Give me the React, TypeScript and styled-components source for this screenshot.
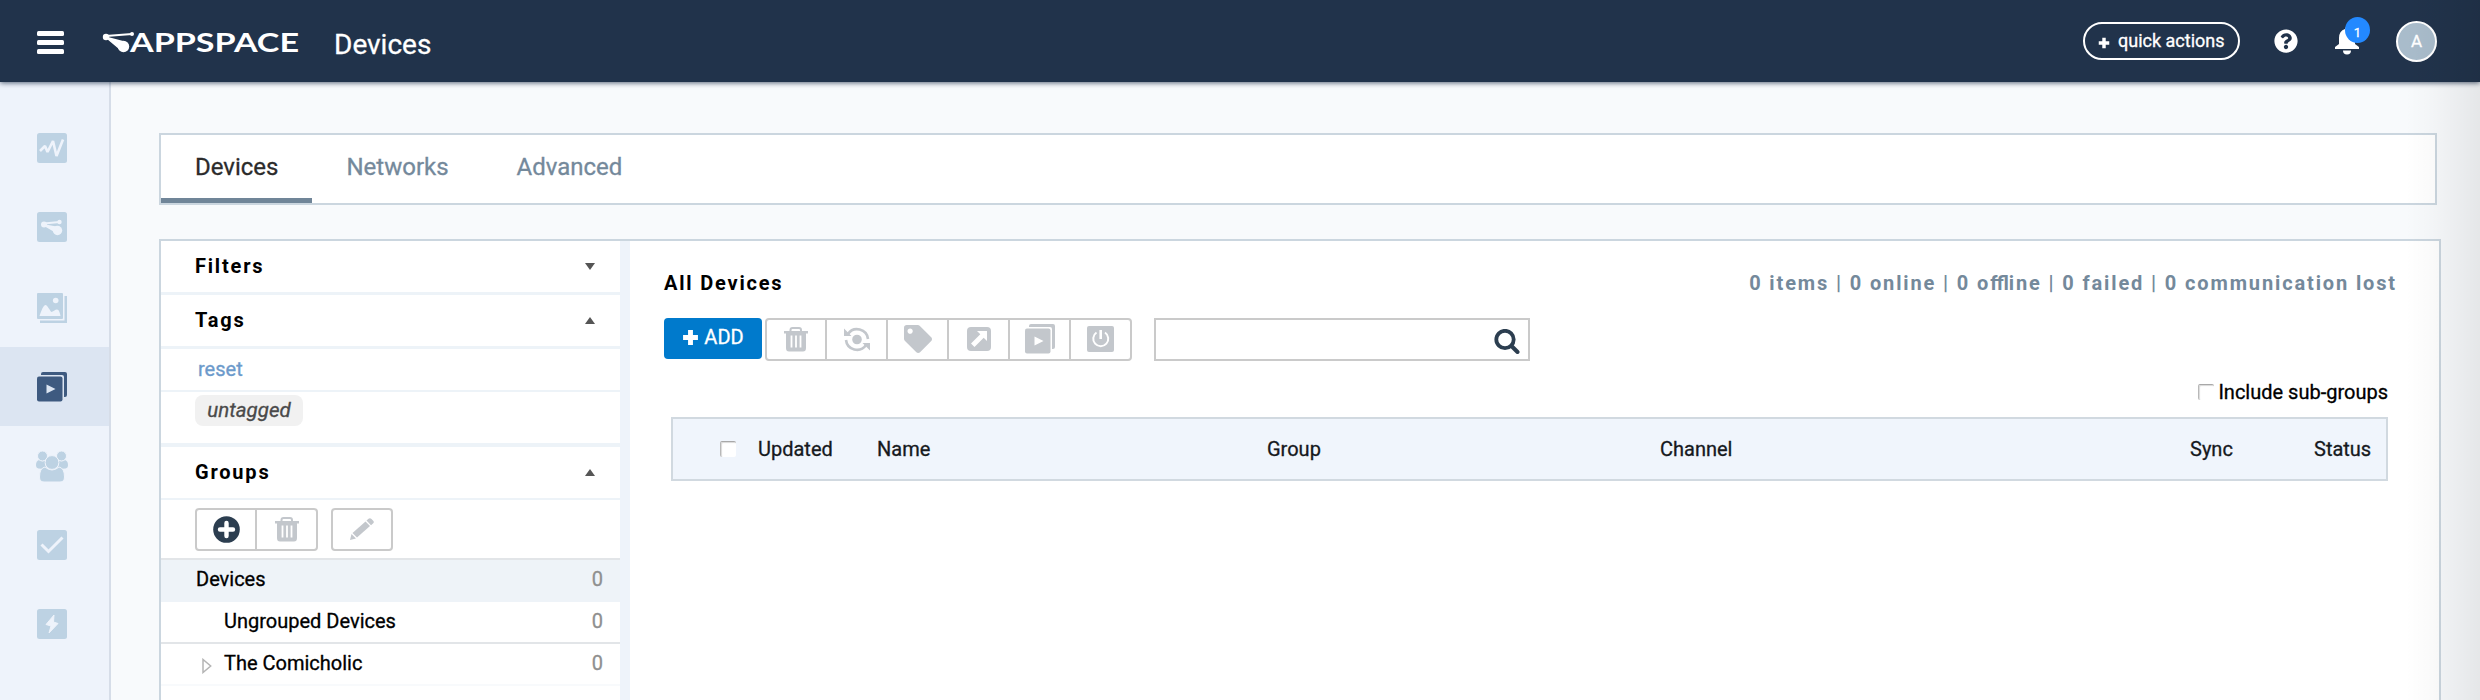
import React from "react";
import styled, { createGlobalStyle } from "styled-components";
import { FaQuestionCircle, FaTag } from "react-icons/fa";

const GlobalStyle = createGlobalStyle`
  * {
    box-sizing: border-box;
  }

  body {
    -webkit-text-stroke: 0.3px;
    background-color: #f8fafc;
    font-family: Roboto, "Liberation Sans", sans-serif;
    margin: 0;
    overflow: hidden;
  }

  svg {
    display: block;
    flex-shrink: 0;
  }
`;

const Page = styled.div`
  display: flex;
  flex-direction: column;
  height: 700px;
  overflow: hidden;
  position: relative;
  width: 2480px;
`;

const EdgeShade = styled.div`
  background: linear-gradient(to right, rgba(0, 0, 0, 0), rgba(0, 0, 0, 0.02) 35%, rgba(0, 0, 0, 0.08));
  bottom: 0;
  pointer-events: none;
  position: absolute;
  right: 0;
  top: 0;
  width: 75px;
  z-index: 3;
`;

const Header = styled.header`
  align-items: center;
  background-color: #21334b;
  box-shadow: 0 1px 5px rgba(33, 51, 75, 0.75);
  display: flex;
  flex-shrink: 0;
  height: 82px;
  padding: 0 43px 0 37px;
  position: relative;
  z-index: 2;
`;

const MenuButton = styled.button`
  background: none;
  border: none;
  display: flex;
  flex-direction: column;
  gap: 4px;
  height: 23px;
  margin-top: 2px;
  padding: 0;
  width: 27px;
`;

const MenuBar = styled.span`
  background-color: #ffffff;
  border-radius: 1.5px;
  height: 5px;
  width: 27px;
`;

const LogoSvg = styled.svg`
  margin: 4px 0 0 37px;
  overflow: visible;
`;

const LogoText = styled.text`
  fill: #ffffff;
  font-family: Lato, sans-serif;
  font-size: 26.5px;
  font-weight: 700;
`;

const PageTitle = styled.h1`
  color: #ffffff;
  font-size: 28px;
  font-weight: 400;
  line-height: 32px;
  margin: 7px 0 0 34px;
`;

const HeaderActions = styled.div`
  align-items: center;
  color: #ffffff;
  display: flex;
  margin-left: auto;
`;

const QuickActions = styled.button`
  -webkit-text-stroke: 0.3px;
  align-items: center;
  background: none;
  border: 2px solid #ffffff;
  border-radius: 19px;
  color: #ffffff;
  display: flex;
  font-family: inherit;
  font-size: 18px;
  gap: 8px;
  height: 38px;
  padding: 0 0 1px 13px;
  width: 157px;

  svg {
    margin-top: 4px;
  }
`;

const HelpIcon = styled(FaQuestionCircle)`
  height: 24px;
  margin-left: 34px;
  width: 24px;
`;

const Notifications = styled.div`
  height: 28px;
  margin-left: 37px;
  position: relative;
  width: 24px;
`;

const Badge = styled.span`
  align-items: center;
  background-color: #2389ff;
  border-radius: 50%;
  display: flex;
  font-size: 13px;
  height: 26px;
  justify-content: center;
  left: 10px;
  padding-top: 4px;
  position: absolute;
  top: -10px;
  width: 25px;
`;

const Avatar = styled.div`
  align-items: center;
  background-color: #a9bccb;
  border: 2px solid #ffffff;
  border-radius: 50%;
  display: flex;
  font-size: 17px;
  height: 41px;
  justify-content: center;
  margin-left: 37px;
  width: 41px;
`;

const Body = styled.div`
  display: flex;
  flex: 1;
`;

const Rail = styled.nav`
  background-color: #eef3fb;
  border-right: 2px solid #d6dde8;
  padding-top: 28px;
  width: 111px;
`;

const RailItem = styled.a<{ $active?: boolean; $top?: number }>`
  background-color: ${({ $active }) => ($active ? "#dce5f2" : "transparent")};
  color: ${({ $active }) => ($active ? "#3e5a80" : "#bdd2e3")};
  display: block;
  height: 79px;
  padding: ${({ $top = 25 }) => $top}px 0 0 36px;
`;

const Main = styled.main`
  display: flex;
  flex: 1;
  flex-direction: column;
  gap: 34px;
  padding: 51px 39px 0 48px;
`;

const TabBar = styled.div`
  background-color: #ffffff;
  border: 2px solid #cbd6df;
  display: flex;
  height: 72px;
  margin-right: 4px;
`;

const Tab = styled.a<{ $active?: boolean }>`
  border-bottom: 5px solid ${({ $active }) => ($active ? "#708598" : "transparent")};
  color: ${({ $active }) => ($active ? "#2b2b2b" : "#74899b")};
  font-size: 24px;
  line-height: 62px;
  padding: 1px 34px 0;
`;

const Panel = styled.section`
  background-color: #ffffff;
  border: 2px solid #cbd6df;
  border-bottom: none;
  display: flex;
  flex: 1;
`;

const Sidebar = styled.aside`
  border-right: 10px solid #eef3fa;
  width: 469px;
`;

const SectionHeader = styled.div<{ $line: number }>`
  align-items: center;
  border-bottom: ${({ $line }) => $line}px solid #edf3f8;
  display: flex;
  height: ${({ $line }) => 51 + $line}px;
  justify-content: space-between;
  padding: 0 25px 1px 34px;
`;

const Heading = styled.h2`
  font-size: 20px;
  font-weight: 700;
  -webkit-text-stroke: 0;
  letter-spacing: 1.8px;
  line-height: 24px;
  margin: 0;
`;

const ResetRow = styled.div`
  border-bottom: 2px solid #edf3f8;
  color: #6c9acb;
  font-size: 20px;
  height: 43px;
  line-height: 40px;
  padding-left: 37px;
`;

const TagRow = styled.div`
  border-bottom: 4px solid #edf3f8;
  height: 55px;
  padding: 3px 0 0 34px;
`;

const TagPill = styled.span`
  background-color: #f1f1f1;
  border-radius: 8px;
  color: #4a4a4a;
  display: inline-block;
  font-size: 20.5px;
  font-style: italic;
  height: 31px;
  line-height: 30px;
  text-align: center;
  width: 108px;
`;

const GroupTools = styled.div`
  border-bottom: 2px solid #e2e5e8;
  display: flex;
  gap: 13px;
  height: 60px;
  padding: 8px 0 0 34px;
`;

const ButtonGroup = styled.div`
  border: 2px solid #cacaca;
  border-radius: 4px;
  color: #c3c7cc;
  display: flex;
  height: 43px;
`;

const ToolButton = styled.button`
  align-items: center;
  background: none;
  border: none;
  color: inherit;
  display: flex;
  justify-content: center;
  padding: 0 0 1px;
  width: 58px;

  & + & {
    border-left: 2px solid #cacaca;
    width: 61px;
  }
`;

const GroupRow = styled.div<{ $selected?: boolean; $indent: number; $line?: string }>`
  align-items: center;
  background-color: ${({ $selected }) => ($selected ? "#eef3f8" : "#ffffff")};
  border-bottom: ${({ $line }) => ($line ? `2px solid ${$line}` : "none")};
  display: flex;
  font-size: 20px;
  height: 42px;
  padding: 0 17px ${({ $selected }) => ($selected ? 4 : 2)}px ${({ $indent }) => $indent}px;

  svg {
    margin: 5px 12px 0 0;
  }
`;

const Count = styled.span`
  color: #8f8f8f;
  margin-left: auto;
`;

const Content = styled.div`
  flex: 1;
  padding: 30px 0 0 34px;
`;

const TitleRow = styled.div`
  display: flex;
  justify-content: space-between;
  padding-right: 42px;
`;

const Summary = styled(Heading)`
  color: #74899b;
  letter-spacing: 1.87px;
`;

const Tight = styled.span`
  letter-spacing: 0;
`;

const Toolbar = styled.div`
  align-items: flex-start;
  display: flex;
  margin-top: 23px;
`;

const AddButton = styled.button`
  -webkit-text-stroke: 0.3px;
  align-items: center;
  background-color: #007acc;
  border: none;
  border-radius: 4px;
  color: #ffffff;
  display: flex;
  font-family: inherit;
  font-size: 20px;
  gap: 5px;
  height: 41px;
  justify-content: center;
  margin-right: 3px;
  padding: 0 0 3px;
  width: 98px;
`;

const SearchBox = styled.div`
  align-items: center;
  border: 2px solid #cacaca;
  color: #2c3e50;
  display: flex;
  height: 43px;
  justify-content: flex-end;
  margin-left: 22px;
  padding: 3px 8px 0 0;
  width: 376px;
`;

const SubGroups = styled.label`
  align-items: center;
  display: flex;
  font-size: 20px;
  gap: 4px;
  justify-content: flex-end;
  line-height: 24px;
  margin-top: 19px;
  padding-right: 51px;
`;

const Checkbox = styled.span`
  background-color: #ffffff;
  border-left: 1px solid #b8b8b8;
  border-radius: 2px;
  border-top: 1px solid #a8a8a8;
  box-shadow: inset 1px 1px 1px rgba(0, 0, 0, 0.15);
  height: 16px;
  width: 16px;
`;

const TableHead = styled.div`
  align-items: center;
  background-color: #f0f5fc;
  border: 2px solid #d1d9e0;
  color: #16191d;
  display: grid;
  font-size: 20px;
  grid-template-columns: 38px 119px 390px 393px 530px 124px 1fr;
  height: 64px;
  margin: 13px 51px 0 7px;
  padding-left: 47px;
`;

const LogoMark = () => (
  <g fill="currentColor" stroke="currentColor">
    <circle cx="4" cy="6" r="3.2" stroke="none" />
    <circle cx="30" cy="3" r="2" stroke="none" />
    <circle cx="21.500" cy="15.500" r="5.700" stroke="none" />
    <path d="M4 5 30 3" strokeWidth="1.800" fill="none" />
    <path d="M4 6.200 22 11 18 18Z" strokeWidth="1.500" strokeLinejoin="round" />
  </g>
);

const Logo = () => (
  <LogoSvg width="199" height="28" color="#ffffff">
    <g transform="translate(1 2)">
      <LogoMark />
    </g>
    <LogoText x="29" y="23" textLength="169" lengthAdjust="spacingAndGlyphs">
      APPSPACE
    </LogoText>
  </LogoSvg>
);

const RailTile = ({ children }: { children: React.ReactNode }) => (
  <svg width="32" height="30" viewBox="-1 0 32 30">
    <rect width="30" height="30" rx="2.500" fill="currentColor" />
    {children}
  </svg>
);

const ActivityIcon = () => (
  <RailTile>
    <path d="M3 18 8 13 10.500 19 16 8 19.500 23 26 6.500" fill="none" stroke="#eef3fb" strokeWidth="2.600" strokeLinejoin="bevel" />
  </RailTile>
);

const NetworkIcon = () => (
  <RailTile>
    <g fill="#eef3fb" stroke="#eef3fb">
      <circle cx="7" cy="12.500" r="3" stroke="none" />
      <circle cx="22.500" cy="10" r="2.200" stroke="none" />
      <circle cx="20.500" cy="18.500" r="4.700" stroke="none" />
      <path d="M7 11.500 22.500 10" strokeWidth="2" />
      <path d="M7 13 21 15.500 18 19.500Z" strokeWidth="1.500" />
    </g>
  </RailTile>
);

const GalleryIcon = () => (
  <svg width="32" height="30" viewBox="-1 0 32 30" fill="currentColor">
    <path d="M27.500 3H30V30H3V27.500H27.500Z" />
    <rect width="26" height="26" rx="1" />
    <circle cx="18.700" cy="7.500" r="2.800" fill="#eef3fb" />
    <path d="M2.500 23C4.500 17 6.500 12 8.500 12S13 18 14.500 19C17 18 18 16.500 20 16.500S23 20 23.500 23Z" fill="#eef3fb" />
  </svg>
);

const PlayerIcon = ({ hole }: { hole: string }) => (
  <svg width="32" height="30" viewBox="-1 0 32 30" fill="currentColor">
    <path d="M4 3V2Q4 0 6 0H28Q30 0 30 2V23Q30 25 28 25H27V5Q27 3 25 3Z" />
    <rect y="4.500" width="25.500" height="25" rx="2" />
    <path d="M9.500 12.500 18.500 17 9.500 21.500Z" fill={hole} />
  </svg>
);

const UsersIcon = () => (
  <svg width="32" height="31" viewBox="0 0 32 31" fill="currentColor">
    <path d="M3 9Q6 11 9 9.500Q8.500 14 10.500 17Q8 18 2.500 17.500Q0 17 0 14Q0 10 3 9Z" />
    <path d="M29 9Q26 11 23 9.500Q23.500 14 21.500 17Q24 18 29.500 17.500Q32 17 32 14Q32 10 29 9Z" />
    <g stroke="#eef3fb">
      <circle cx="6.500" cy="5" r="5" />
      <circle cx="25.500" cy="5" r="5" />
      <path d="M9 16Q16 22 23 16Q28.500 17 28.500 26Q28.500 31 24 31H8Q3.500 31 3.500 26Q3.500 17 9 16Z" />
      <circle cx="16" cy="11.500" r="6.900" />
    </g>
  </svg>
);

const CheckIcon = () => (
  <RailTile>
    <path d="M4.500 14.500 11.500 21.500 25.500 7.500" fill="none" stroke="#eef3fb" strokeWidth="3" />
  </RailTile>
);

const BoltIcon = () => (
  <RailTile>
    <path d="M17 6 9 15.500 14 17 12 24 21 14.500 16.500 13Z" fill="#eef3fb" stroke="#eef3fb" strokeLinejoin="round" />
  </RailTile>
);

const PlusIcon = ({ size }: { size: number }) => (
  <svg width={size} height={size} viewBox="0 0 16 16">
    <path d="M8 1V15M1 8H15" stroke="currentColor" strokeWidth="4.600" strokeLinecap="butt" />
  </svg>
);

const BellIcon = () => (
  <svg width="24" height="28" viewBox="0 0 24 28" fill="currentColor">
    <path d="M10 2Q10 0 12 0T14 2Q20 4 20 11V17L24 20V22H0V20L4 17V11Q4 4 10 2Z" />
    <path d="M8 23.500H16Q16 27.500 12 27.500T8 23.500Z" />
  </svg>
);

const PencilIcon = () => (
  <svg width="24" height="22" viewBox="0 0 24 22" fill="currentColor">
    <path d="M0 22 1.500 16 6 20.500Z" />
    <path d="M2.500 15 15.500 3.500 20 8 7 19.500Z" />
    <path d="M16.500 2.500 18.500 .800Q20 -.400 21.500 1L23.200 2.700Q24.600 4.200 23 5.500L21 7.200Z" />
  </svg>
);

const TrashIcon = () => (
  <svg width="24" height="25" viewBox="0 0 24 25">
    <path d="M6.500 4.500V3Q6.500 1 8.500 1H15Q17 1 17 3V4.500" fill="none" stroke="currentColor" strokeWidth="2" />
    <path d="M0 4H24V6.500H22V21Q22 24.500 19 24.500H5Q2 24.500 2 21V6.500H0Z" fill="currentColor" />
    <path d="M7.500 8.500V20.500M12 8.500V20.500M16.500 8.500V20.500" stroke="#ffffff" strokeWidth="1.800" />
  </svg>
);

const SyncIcon = () => (
  <svg width="28" height="27" viewBox="0 0 28 27" fill="none" stroke="currentColor" strokeWidth="2.600">
    <path d="M5 8A11 11 0 0 1 25 13M23 19A11 11 0 0 1 3 14" />
    <path d="M1 2.500V10H8.500ZM27 24.500V17H19.500Z" fill="currentColor" stroke="none" />
    <circle cx="14" cy="13.500" r="4.800" fill="currentColor" stroke="none" />
  </svg>
);

const LaunchIcon = () => (
  <svg width="24" height="24" viewBox="0 0 24 24">
    <rect width="24" height="24" rx="4" fill="currentColor" />
    <path d="M10 4H20V14L16.700 10.700 7.500 20 4 16.500 13.300 7.300Z" fill="#ffffff" />
  </svg>
);

const PowerIcon = () => (
  <svg width="27" height="26" viewBox="0 0 27 26" fill="none" stroke="#ffffff" strokeWidth="2">
    <rect width="27" height="26" rx="2" fill="currentColor" stroke="none" />
    <path d="M9.500 6.500A7.500 7.500 0 1 0 18 6.500" />
    <path d="M13.700 4V13" strokeWidth="2.600" />
  </svg>
);

const AddCircleIcon = () => (
  <svg width="27" height="27" viewBox="0 0 27 27">
    <circle cx="13.500" cy="13.500" r="13.300" fill="#2c3e50" />
    <path d="M13.500 7V20M7 13.500H20" stroke="#ffffff" strokeWidth="4.400" strokeLinecap="round" />
  </svg>
);

const SearchIcon = () => (
  <svg width="26" height="25" viewBox="0 0 26 25" fill="none" stroke="currentColor">
    <circle cx="11" cy="10.500" r="8.700" strokeWidth="3.800" />
    <path d="M17.500 17 23.500 23" strokeWidth="4" strokeLinecap="round" />
  </svg>
);

const Caret = ({ up }: { up?: boolean }) => (
  <svg width="10" height="7" viewBox="0 0 10 7">
    <path d={up ? "M0 7H10L5 0Z" : "M0 0H10L5 7Z"} fill="#555555" />
  </svg>
);

const ExpandArrow = () => (
  <svg width="10" height="16" viewBox="0 0 10 16">
    <path d="M1 1.500V14.500L8.700 8Z" fill="none" stroke="#b5b5b5" strokeWidth="1.500" />
  </svg>
);

const columns = ["Updated", "Name", "Group", "Channel", "Sync", "Status"];

function App() {
  return (
    <Page>
      <GlobalStyle />
      <Header>
        <MenuButton aria-label="Menu">
          <MenuBar />
          <MenuBar />
          <MenuBar />
        </MenuButton>
        <Logo />
        <PageTitle>Devices</PageTitle>
        <HeaderActions>
          <QuickActions>
            <PlusIcon size={12} />
            quick actions
          </QuickActions>
          <HelpIcon />
          <Notifications>
            <BellIcon />
            <Badge>1</Badge>
          </Notifications>
          <Avatar>A</Avatar>
        </HeaderActions>
      </Header>
      <Body>
        <Rail>
          <RailItem $top={23}>
            <ActivityIcon />
          </RailItem>
          <RailItem $top={23}>
            <NetworkIcon />
          </RailItem>
          <RailItem>
            <GalleryIcon />
          </RailItem>
          <RailItem $active>
            <PlayerIcon hole="#dce5f2" />
          </RailItem>
          <RailItem>
            <UsersIcon />
          </RailItem>
          <RailItem>
            <CheckIcon />
          </RailItem>
          <RailItem>
            <BoltIcon />
          </RailItem>
        </Rail>
        <Main>
          <TabBar>
            <Tab $active>Devices</Tab>
            <Tab>Networks</Tab>
            <Tab>Advanced</Tab>
          </TabBar>
          <Panel>
            <Sidebar>
              <SectionHeader $line={3}>
                <Heading>Filters</Heading>
                <Caret />
              </SectionHeader>
              <SectionHeader $line={3}>
                <Heading>Tags</Heading>
                <Caret up />
              </SectionHeader>
              <ResetRow>reset</ResetRow>
              <TagRow>
                <TagPill>untagged</TagPill>
              </TagRow>
              <SectionHeader $line={2}>
                <Heading>Groups</Heading>
                <Caret up />
              </SectionHeader>
              <GroupTools>
                <ButtonGroup>
                  <ToolButton>
                    <AddCircleIcon />
                  </ToolButton>
                  <ToolButton>
                    <TrashIcon />
                  </ToolButton>
                </ButtonGroup>
                <ButtonGroup>
                  <ToolButton>
                    <PencilIcon />
                  </ToolButton>
                </ButtonGroup>
              </GroupTools>
              <GroupRow $selected $indent={35}>
                Devices
                <Count>0</Count>
              </GroupRow>
              <GroupRow $indent={63} $line="#e2e5e8">
                Ungrouped Devices
                <Count>0</Count>
              </GroupRow>
              <GroupRow $indent={41} $line="#f8fafc">
                <ExpandArrow />
                The Comicholic
                <Count>0</Count>
              </GroupRow>
            </Sidebar>
            <Content>
              <TitleRow>
                <Heading>All Devices</Heading>
                <Summary>
                  0 items | 0 online | 0 o<Tight>ffl</Tight>ine | 0 failed | 0 communication lost
                </Summary>
              </TitleRow>
              <Toolbar>
                <AddButton>
                  <PlusIcon size={17} />
                  ADD
                </AddButton>
                <ButtonGroup>
                  <ToolButton>
                    <TrashIcon />
                  </ToolButton>
                  <ToolButton>
                    <SyncIcon />
                  </ToolButton>
                  <ToolButton>
                    <FaTag size={28} />
                  </ToolButton>
                  <ToolButton>
                    <LaunchIcon />
                  </ToolButton>
                  <ToolButton>
                    <PlayerIcon hole="#ffffff" />
                  </ToolButton>
                  <ToolButton>
                    <PowerIcon />
                  </ToolButton>
                </ButtonGroup>
                <SearchBox>
                  <SearchIcon />
                </SearchBox>
              </Toolbar>
              <SubGroups>
                <Checkbox />
                Include sub-groups
              </SubGroups>
              <TableHead>
                <Checkbox />
                {columns.map((column) => (
                  <span key={column}>{column}</span>
                ))}
              </TableHead>
            </Content>
          </Panel>
        </Main>
      </Body>
      <EdgeShade />
    </Page>
  );
}

export default App;
